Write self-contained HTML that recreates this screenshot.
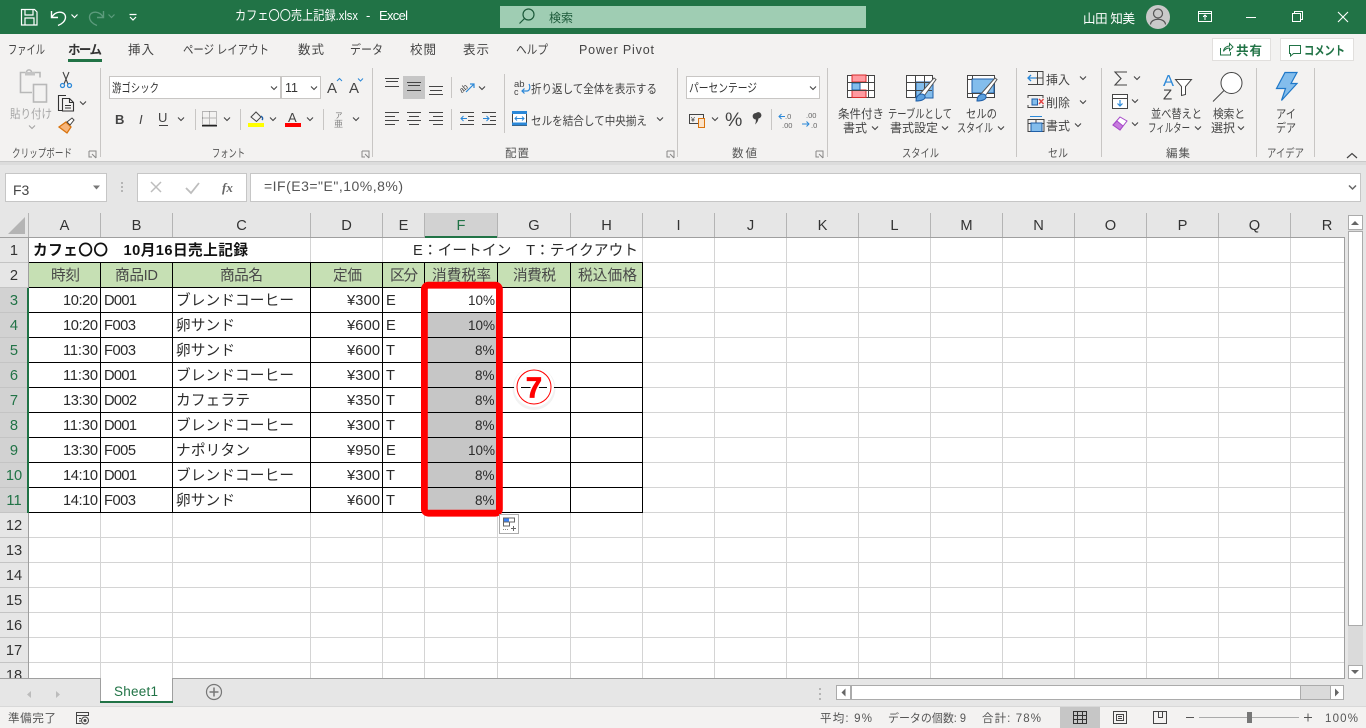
<!DOCTYPE html>
<html lang="ja"><head><meta charset="utf-8"><title>Excel</title>
<style>
html,body{margin:0;padding:0;width:1366px;height:728px;overflow:hidden;background:#e6e6e6}
svg{display:block;position:absolute;left:0;top:0}
text{font-family:"Liberation Sans","Noto Sans CJK JP",sans-serif;white-space:pre}
.r{font-size:12px;fill:#444}
.t{font-size:12.5px;fill:#444}
.g{font-size:11.5px;fill:#555}
.c{font-size:14.67px;fill:#2a2a2a}
.p{font-size:13.5px;fill:#2a2a2a}
.h{font-size:14.67px;fill:#484848}
.k{font-size:14.67px;fill:#333;text-anchor:middle}
.n{font-size:14.67px;fill:#333;text-anchor:middle}
.s{font-size:11.5px;fill:#555}
.i{fill:none;stroke:#444;stroke-width:1}
.q{shape-rendering:crispEdges}
</style></head><body>
<svg width="1366" height="728" viewBox="0 0 1366 728" xmlns="http://www.w3.org/2000/svg">
<defs>
<path id="v" d="M-3 -1.500L0 1.500L3 -1.500" fill="none" stroke="#444" stroke-width="1.100"/>
<path id="dl" d="M0 0h7v7M7 7L3 3M2 2v0M0 0v6h3" fill="none" stroke="#888" stroke-width="1"/>
</defs>
<!-- backgrounds -->
<rect width="1366" height="728" fill="#e6e6e6"/>
<rect width="1366" height="34" fill="#217346"/>
<rect y="34" width="1366" height="127" fill="#f3f2f1"/>
<rect y="161" width="1366" height="1" fill="#c9c9c9"/>
<rect y="162" width="1366" height="3" fill="#dcdcdc"/>
<!-- title bar -->
<g fill="none" stroke="#fff" stroke-width="1.200">
<path d="M21.500 9.500h13l2.500 2.500v13h-15.500z"/><path d="M25 9.500v5.500h8v-5.500M25 25v-7h9v7"/>
<path d="M51.500 11v6.500h6.500M52 17.500C54 11 65 10 65.500 17C65.500 21 62 24 58 25.500" stroke-width="1.400"/>
<path d="M71.500 14.500l3 3 3-3"/>
<g stroke="#5c9b7c"><path d="M103.500 11v6.500h-6.500M103 17.500C101 11 90 10 89.500 17C89.500 21 93 24 97 25.500" stroke-width="1.400"/><path d="M108.500 14.500l3 3 3-3"/></g>
<path d="M129.500 14.500h7M130 17l3 3 3-3"/>
</g>
<text x="235" y="20" fill="#fff" style="font-size:13px" textLength="123" lengthAdjust="spacingAndGlyphs">カフェ〇〇売上記録.xlsx</text>
<text x="366" y="20" fill="#fff" style="font-size:13px">-</text>
<text x="379" y="20" fill="#fff" style="font-size:13px" textLength="29">Excel</text>
<rect x="500" y="6" width="366" height="22" fill="#9fcdb3"/>
<g fill="none" stroke="#1c5a3a" stroke-width="1.200"><circle cx="528.500" cy="14.500" r="5.500"/><path d="M524.500 18.500l-5 5"/></g>
<text x="549" y="22" fill="#1c5a3a" style="font-size:12px" textLength="24">検索</text>
<text x="1083" y="23" fill="#fff" style="font-size:12.5px" textLength="52">山田 知美</text>
<circle cx="1158" cy="17" r="12" fill="#c9c9c9"/>
<g fill="none" stroke="#555" stroke-width="1.200"><circle cx="1158" cy="13.500" r="4.500"/><path d="M1150.500 24.500c.5-7 14.500-7 15 0"/></g>
<g fill="none" stroke="#fff" stroke-width="1.100" class="q">
<path d="M1198.500 11.500h13v10h-13zM1198.500 13.500h13M1205 20v-5M1203 17l2-2 2 2"/>
<path d="M1246 17.500h10"/>
<path d="M1292.500 13.500h8v8h-8zM1294.500 13.500v-2h8v8h-2"/>
</g>
<path d="M1338 12l10 10M1348 12l-10 10" stroke="#fff" stroke-width="1.100" fill="none"/>
<!-- ribbon tabs -->
<g class="t">
<text x="8" y="54" class="t" textLength="37" lengthAdjust="spacingAndGlyphs">ファイル</text>
<text x="68" y="54" style="font-size:12.5px;font-weight:700;fill:#333" textLength="34">ホーム</text>
<text x="128" y="54" class="t" textLength="26">挿入</text>
<text x="183" y="54" class="t" textLength="86" lengthAdjust="spacingAndGlyphs">ページ レイアウト</text>
<text x="298" y="54" class="t" textLength="26">数式</text>
<text x="350" y="54" class="t" textLength="33" lengthAdjust="spacingAndGlyphs">データ</text>
<text x="410" y="54" class="t" textLength="26">校閲</text>
<text x="463" y="54" class="t" textLength="26">表示</text>
<text x="516" y="54" class="t" textLength="32" lengthAdjust="spacingAndGlyphs">ヘルプ</text>
<text x="579" y="54" class="t" textLength="75">Power Pivot</text>
</g>
<rect x="68" y="59" width="34" height="3" fill="#217346"/>
<!-- share / comment -->
<rect x="1212.500" y="38.500" width="58" height="22" fill="#fff" stroke="#e1dfdd" class="q"/>
<path d="M1220.500 48v7h10v-3M1223.500 51c.5-3 3-5 6-5v-2.500l3.500 3.500-3.500 3.500v-2.500c-2.500 0-4.500 1-6 3.500" fill="none" stroke="#217346"/>
<text x="1236" y="55" style="font-size:12.5px;font-weight:700;fill:#217346" textLength="26">共有</text>
<rect x="1280.500" y="38.500" width="73" height="22" fill="#fff" stroke="#e1dfdd" class="q"/>
<path d="M1289.500 45.500h11v8h-7l-3 2.500v-2.500h-1z" fill="none" stroke="#217346"/>
<text x="1304" y="55" style="font-size:12.5px;font-weight:700;fill:#217346" textLength="41" lengthAdjust="spacingAndGlyphs">コメント</text>
<!-- ribbon separators -->
<g fill="#c8c6c4" class="q">
<rect x="100" y="68" width="1" height="89"/><rect x="372" y="68" width="1" height="89"/><rect x="677" y="68" width="1" height="89"/><rect x="827" y="68" width="1" height="89"/><rect x="1016" y="68" width="1" height="89"/><rect x="1101" y="68" width="1" height="89"/><rect x="1256" y="68" width="1" height="89"/><rect x="1314" y="68" width="1" height="89"/>
<rect x="195" y="109" width="1" height="21"/><rect x="240" y="109" width="1" height="21"/><rect x="323" y="109" width="1" height="21"/>
<rect x="451" y="77" width="1" height="21"/><rect x="451" y="109" width="1" height="21"/><rect x="504" y="74" width="1" height="59"/><rect x="771" y="109" width="1" height="21"/>
</g>
<!-- clipboard -->
<g fill="none" stroke="#b8b8b8" stroke-width="1.600"><path d="M32 92.500h-11.500v-20h6c0-3.500 5-3.500 5 0h8.500v5"/><rect x="33.500" y="84.500" fill="#f3f2f1" width="13" height="17.500"/></g>
<rect x="25" y="72" width="10" height="3.500" fill="#c4c4c4"/>
<text x="10" y="118" style="font-size:12px;fill:#a6a6a6" textLength="42" lengthAdjust="spacingAndGlyphs">貼り付け</text>
<use href="#v" x="32" y="127" opacity=".45"/>
<g fill="none" stroke="#444" stroke-width="1.100"><path d="M63 72l5 12M69 72l-5 12"/></g>
<circle cx="62.500" cy="85.500" r="2" fill="none" stroke="#2b88d8" stroke-width="1.300"/><circle cx="69.500" cy="85.500" r="2" fill="none" stroke="#2b88d8" stroke-width="1.300"/>
<g fill="none" stroke="#333" stroke-width="1.100"><path d="M62 110.500h-3.500v-15h7.500"/><path d="M62.500 98.500h7l4 4v8.500h-11zM69.500 98.500v4h4M65 105.500h6M65 108h6" fill="#f3f2f1"/></g>
<use href="#v" x="83" y="103"/>
<path d="M59 127l7-5 5 5-4 6z" fill="#f7b57a" stroke="#d9730d" stroke-width="1.300"/><path d="M67 122l5-4 2 2-4 5z" fill="#fff" stroke="#444"/>
<text x="12" y="157" class="g" textLength="60" lengthAdjust="spacingAndGlyphs">クリップボード</text>
<use href="#dl" x="89" y="151"/>
<!-- font group -->
<rect x="109.500" y="76.500" width="171" height="22" fill="#fff" stroke="#c8c6c4" class="q"/>
<rect x="281.500" y="76.500" width="39" height="22" fill="#fff" stroke="#c8c6c4" class="q"/>
<text x="112" y="92" style="font-size:12px;fill:#333" textLength="47" lengthAdjust="spacingAndGlyphs">游ゴシック</text>
<text x="285" y="92" style="font-size:12.5px;fill:#333">11</text>
<use href="#v" x="274" y="88"/><use href="#v" x="314" y="88"/>
<text x="327" y="93" style="font-size:15px;fill:#444">A</text><path d="M337 81l2.500-2.500 2.500 2.500" fill="none" stroke="#2b88d8"/>
<text x="349" y="93" style="font-size:15px;fill:#444">A</text><path d="M358 78.500l2.500 2.500 2.500-2.500" fill="none" stroke="#2b88d8"/>
<text x="115" y="124" style="font-size:13px;font-weight:700;fill:#444">B</text>
<text x="139" y="124" style="font-size:13px;font-style:italic;fill:#444">I</text>
<text x="158" y="122" style="font-size:13px;fill:#444">U</text><rect x="159" y="125" width="9" height="1" fill="#444"/>
<use href="#v" x="181" y="119"/>
<path d="M202.500 111.500h14v13h-14zM209.500 111.500v13M202.500 118h14" fill="none" stroke="#777" stroke-dasharray="1 1" stroke-width=".9"/><rect x="202" y="125" width="15" height="1.500" fill="#222"/>
<use href="#v" x="227" y="119"/>
<path d="M251 117l5-5 5 5-4.500 4.500z" fill="none" stroke="#444"/><path d="M261 116c2 1.500 2 3 1 4" stroke="#1f5fa8" stroke-width="1.400" fill="none"/>
<rect x="248" y="123" width="16" height="4" fill="#ff0"/>
<use href="#v" x="273" y="119"/>
<text x="288" y="122" style="font-size:13px;fill:#444">A</text>
<rect x="285" y="123" width="16" height="4" fill="#f00"/>
<use href="#v" x="310" y="119"/>
<text x="335" y="118" style="font-size:7.500px;fill:#777">ア</text><text x="334" y="127" style="font-size:9px;fill:#888">亜</text>
<use href="#v" x="356" y="119"/>
<text x="212" y="157" class="g" textLength="33" lengthAdjust="spacingAndGlyphs">フォント</text>
<use href="#dl" x="362" y="151"/>
<!-- alignment -->
<rect x="403" y="76" width="22" height="23" fill="#c6c6c6"/>
<g fill="none" stroke="#444" class="q">
<path d="M385 78.500h14M386 81.500h12M385 86.500h14"/>
<path d="M407 82.500h14M408 85.500h12M407 90.500h14"/>
<path d="M429 86.500h14M430 90.500h12M429 94.500h14"/>
<path d="M385 112.500h14M385 116.500h10M385 120.500h14M385 124.500h10"/>
<path d="M407 112.500h14M409 116.500h10M407 120.500h14M409 124.500h10"/>
<path d="M429 112.500h14M433 116.500h10M429 120.500h14M433 124.500h10"/>
<path d="M460 112.500h14M468 116.500h6M468 120.500h6M460 124.500h14"/>
<path d="M482 112.500h14M490 116.500h6M490 120.500h6M482 124.500h14"/>
</g>
<path d="M461 118.500h6M463.500 116l-2.500 2.500 2.500 2.500M483 118.500h6M486.500 116l2.500 2.500-2.500 2.500" fill="none" stroke="#2b88d8"/>
<text x="459" y="90" style="font-size:8px;fill:#444" transform="rotate(-40 465 88)">ab</text>
<path d="M466 92l8-8M470 84h4v4" fill="none" stroke="#2b88d8" stroke-width="1.200"/>
<use href="#v" x="482" y="88"/>
<text x="514" y="87" style="font-size:9.500px;fill:#444">ab</text><text x="514" y="95" style="font-size:9px;fill:#444">c</text>
<path d="M529 84c2 4 0 7-2 7h-5M524.500 88.500l-2.500 2.500 2.500 2.500" fill="none" stroke="#2b88d8" stroke-width="1.200"/>
<text x="531" y="93" class="r" textLength="126" lengthAdjust="spacingAndGlyphs">折り返して全体を表示する</text>
<rect x="512.500" y="111.500" width="14" height="14" fill="#fff" stroke="#444" class="q"/><rect x="512" y="111" width="15" height="3" fill="#2b88d8"/><rect x="512" y="122.500" width="15" height="3" fill="#2b88d8"/>
<path d="M515 118.500h9M517 116.500l-2 2 2 2M522 116.500l2 2-2 2" fill="none" stroke="#2b88d8"/>
<text x="531" y="125" class="r" textLength="116" lengthAdjust="spacingAndGlyphs">セルを結合して中央揃え</text>
<use href="#v" x="660" y="119"/>
<text x="505" y="157" class="g" textLength="24">配置</text>
<use href="#dl" x="667" y="151"/>
<!-- number -->
<rect x="686.500" y="76.500" width="133" height="22" fill="#fff" stroke="#c8c6c4" class="q"/>
<text x="689" y="92" style="font-size:12px;fill:#333" textLength="68" lengthAdjust="spacingAndGlyphs">パーセンテージ</text>
<use href="#v" x="813" y="88"/>
<rect x="689.500" y="114.500" width="14" height="9" fill="none" stroke="#444"/><text x="691" y="122" style="font-size:7px;fill:#444">¥</text>
<rect x="698.500" y="118.500" width="6" height="9" fill="#fbe3c9" stroke="#d9730d"/>
<use href="#v" x="715" y="119"/>
<text x="725" y="126" style="font-size:19.500px;fill:#444">%</text>
<path d="M756 113a3.200 3.200 0 1 1 2.500 5.500c-.3 2.500-1.500 4.500-3.500 6c.8-2 1-3.500.8-5a3.200 3.200 0 0 1 .2-6.500z" fill="#444"/>
<text x="785" y="119" style="font-size:7.500px;fill:#666">.0</text><text x="782" y="128" style="font-size:7.500px;fill:#666">.00</text><path d="M779 116.500h6M781.500 114l-2.500 2.500 2.500 2.500" fill="none" stroke="#2b88d8"/>
<text x="806" y="118" style="font-size:7.500px;fill:#666">.00</text><text x="811" y="128" style="font-size:7.500px;fill:#666">.0</text><path d="M802 124h7M806.500 121.500l2.500 2.500-2.500 2.500" fill="none" stroke="#2b88d8"/>
<text x="732" y="157" class="g" textLength="25">数値</text>
<use href="#dl" x="816" y="151"/>
<!-- styles -->
<g class="q">
<rect x="847.500" y="75.500" width="27" height="22" fill="#fff" stroke="#444"/>
<rect x="852" y="75" width="14" height="7" fill="#ff9aa0" stroke="#d92b2b"/><rect x="852" y="90" width="14" height="7.500" fill="#ff9aa0" stroke="#d92b2b"/>
<rect x="852" y="83" width="8" height="7" fill="#83bdec" stroke="#1f5fa8"/>
<path d="M868.500 75v22M847 82.500h27M847 90.500h27" stroke="#444" fill="none"/>
<rect x="906.500" y="75.500" width="26" height="22" fill="#fff" stroke="#444"/>
<rect x="916" y="82" width="17" height="16" fill="#83bdec" stroke="#1f5fa8"/>
<path d="M915.500 75v22M924.500 75v22M906 82.500h26M906 90.500h26" stroke="#444" fill="none"/>
<rect x="967.500" y="75.500" width="27" height="22" fill="#fff" stroke="#444"/>
<rect x="972" y="79" width="22" height="14" fill="#83bdec" stroke="#1f5fa8"/>
<path d="M972.500 75v4M967 79.500h5M967 93.500h27M972.500 93v5" stroke="#444" fill="none"/>
</g>
<g fill="#fff" stroke="#555"><path d="M919 95l15-17 2 1.500-13 18z"/><path d="M980 95l15-17 2 1.500-13 18z"/></g>
<path d="M916 101c0-7 7-9 9-5 1 4-5 5-9 5z" fill="#5ca0de" stroke="#1f5fa8"/>
<path d="M977 101c0-7 7-9 9-5 1 4-5 5-9 5z" fill="#5ca0de" stroke="#1f5fa8"/>
<text x="838" y="118" class="r" textLength="46" lengthAdjust="spacingAndGlyphs">条件付き</text><text x="843" y="132" class="r" textLength="24">書式</text><use href="#v" x="875" y="128"/>
<text x="888" y="118" class="r" textLength="64" lengthAdjust="spacingAndGlyphs">テーブルとして</text><text x="890" y="132" class="r" textLength="48">書式設定</text><use href="#v" x="945" y="128"/>
<text x="966" y="118" class="r" textLength="31" lengthAdjust="spacingAndGlyphs">セルの</text><text x="957" y="132" class="r" textLength="36" lengthAdjust="spacingAndGlyphs">スタイル</text><use href="#v" x="1001" y="128"/>
<text x="902" y="157" class="g" textLength="37" lengthAdjust="spacingAndGlyphs">スタイル</text>
<!-- cells -->
<g class="q" fill="none" stroke="#444">
<path d="M1033 71.500h10v13h-10M1028 71.500h5M1028 84.500h5M1037.500 71v13M1033 78h10"/>
<path d="M1028 95.500h15M1028 107.500h15M1028 95v3M1028 105v3M1043 95v3M1043 105v3"/>
<path d="M1028 119.500h16v12h-16zM1028 123.500h16M1036 119v13"/>
</g>
<path d="M1028 78h8M1031 75l-3 3 3 3" stroke="#2b88d8" fill="none" stroke-width="1.300"/>
<rect x="1032" y="99" width="5.500" height="6" fill="#83bdec" stroke="#1f5fa8"/><path d="M1039 99l4.500 5M1043.500 99l-4.500 5" stroke="#e04343" stroke-width="1.400"/>
<rect x="1031" y="123" width="11" height="8.500" fill="#83bdec" stroke="#1f5fa8"/><path d="M1030 116.500h12" stroke="#2b88d8"/>
<text x="1046" y="84" class="r" textLength="24">挿入</text><use href="#v" x="1083" y="78"/>
<text x="1046" y="107" class="r" textLength="24">削除</text><use href="#v" x="1083" y="102"/>
<text x="1046" y="130" class="r" textLength="24">書式</text><use href="#v" x="1078" y="125"/>
<text x="1048" y="157" class="g" textLength="20" lengthAdjust="spacingAndGlyphs">セル</text>
<!-- editing -->
<path d="M1127 72h-12l6 6.500-6 6.500h12" fill="none" stroke="#444" stroke-width="1.100"/><use href="#v" x="1137" y="78"/>
<rect x="1112.500" y="94.500" width="15" height="14" fill="#fff" stroke="#444"/><path d="M1112 98.500h16" stroke="#444"/><path d="M1120 100v6M1117.500 103.500l2.500 2.500 2.500-2.500" stroke="#2b88d8" fill="none" stroke-width="1.200"/><use href="#v" x="1135" y="101"/>
<path d="M1113 125l7-8 7 4-7 9z" fill="#fff" stroke="#a64ac9"/><path d="M1113 125l4-4 6 5-3 4z" fill="#c77bde" stroke="#a64ac9"/><use href="#v" x="1135" y="124"/>
<text x="1163" y="86" style="font-size:16px;fill:#2b88d8" textLength="11" lengthAdjust="spacingAndGlyphs">A</text><text x="1163" y="99.500" style="font-size:15px;fill:#444">Z</text>
<path d="M1175.500 79.500h16l-6 7v8l-4 1v-9z" fill="#fff" stroke="#444"/>
<text x="1151" y="118" class="r" textLength="51" lengthAdjust="spacingAndGlyphs">並べ替えと</text><text x="1148" y="132" class="r" textLength="42" lengthAdjust="spacingAndGlyphs">フィルター</text><use href="#v" x="1198" y="128"/>
<circle cx="1231.500" cy="83" r="10.500" fill="#fff" stroke="#444"/><path d="M1224 90.500l-11 11" stroke="#444" fill="none"/>
<text x="1213" y="118" class="r" textLength="32" lengthAdjust="spacingAndGlyphs">検索と</text><text x="1211" y="132" class="r" textLength="24">選択</text><use href="#v" x="1241" y="128"/>
<text x="1166" y="157" class="g" textLength="24">編集</text>
<!-- ideas -->
<path d="M1285 72.500h12l-6 11h6l-15.500 17 4-12h-9z" fill="#83bdec" stroke="#1f78c8" stroke-width="1.200"/>
<text x="1276" y="118" class="r" textLength="20" lengthAdjust="spacingAndGlyphs">アイ</text><text x="1276" y="132" class="r" textLength="20" lengthAdjust="spacingAndGlyphs">デア</text>
<text x="1267" y="157" class="g" textLength="37" lengthAdjust="spacingAndGlyphs">アイデア</text>
<path d="M1347 158l5-4.500 5 4.500" fill="none" stroke="#444" stroke-width="1.200"/>
<!-- formula bar -->
<rect x="5.500" y="173.500" width="101" height="28" fill="#fff" stroke="#c6c6c6" class="q"/>
<text x="13" y="195" style="font-size:14px;fill:#444">F3</text>
<path d="M93 185.500h7l-3.500 4z" fill="#777"/>
<g fill="#b5b5b5"><rect x="121" y="182" width="2" height="2"/><rect x="121" y="186" width="2" height="2"/><rect x="121" y="190" width="2" height="2"/></g>
<rect x="137.500" y="173.500" width="109" height="28" fill="#fff" stroke="#c6c6c6" class="q"/>
<path d="M151 182l10 10M161 182l-10 10" stroke="#bdbdbd" stroke-width="1.500" fill="none"/>
<path d="M186 188l5 5 8-10" stroke="#bdbdbd" stroke-width="1.800" fill="none"/>
<text x="222" y="192" style="font-family:'Liberation Serif',serif;font-size:13px;font-style:italic;font-weight:700;fill:#666">fx</text>
<rect x="250.500" y="173.500" width="1110" height="28" fill="#fff" stroke="#c6c6c6" class="q"/>
<text x="264" y="191" style="font-size:14px;fill:#555" textLength="139">=IF(E3="E",10%,8%)</text>
<path d="M1349 185.500l3.500 3.500 3.500-3.500" fill="none" stroke="#666" stroke-width="1.500"/>
<!-- sheet area -->
<rect x="29" y="238" width="1316" height="440" fill="#fff"/>
<!-- header highlights -->
<rect x="425" y="213" width="72" height="24" fill="#d2d2d2"/>
<rect x="0" y="288" width="28" height="225" fill="#d2d2d2"/>
<path d="M8 234h17v-17z" fill="#b4b4b4"/>
<!-- light gridlines -->
<g stroke="#d4d4d4" fill="none" class="q">
<path d="M100.500 262V678M172.500 262V678M310.500 238V678M382.500 238V678M424.500 262V678M497.500 262V678M570.500 262V678M642.500 238V678M714.500 238V678M786.500 238V678M858.500 238V678M930.500 238V678M1002.500 238V678M1074.500 238V678M1146.500 238V678M1218.500 238V678M1290.500 238V678"/>
<path d="M29 262.500H1345M29 287.500H1345M29 312.500H1345M29 337.500H1345M29 362.500H1345M29 387.500H1345M29 412.500H1345M29 437.500H1345M29 462.500H1345M29 487.500H1345M29 512.500H1345M29 537.500H1345M29 562.500H1345M29 587.500H1345M29 612.500H1345M29 637.500H1345M29 662.500H1345"/>
</g>
<!-- header lines -->
<g stroke="#c4c4c4" fill="none" class="q">
<path d="M0 262.500H28M0 287.500H28M0 312.500H28M0 337.500H28M0 362.500H28M0 387.500H28M0 412.500H28M0 437.500H28M0 462.500H28M0 487.500H28M0 512.500H28M0 537.500H28M0 562.500H28M0 587.500H28M0 612.500H28M0 637.500H28M0 662.500H28"/>
</g>
<g stroke="#b4b4b4" fill="none" class="q">
<path d="M28.500 213V237M100.500 213V237M172.500 213V237M310.500 213V237M382.500 213V237M424.500 213V237M497.500 213V237M570.500 213V237M642.500 213V237M714.500 213V237M786.500 213V237M858.500 213V237M930.500 213V237M1002.500 213V237M1074.500 213V237M1146.500 213V237M1218.500 213V237M1290.500 213V237"/>
</g>
<g stroke="#9f9f9f" fill="none" class="q">
<path d="M0 237.500H1345M28.500 238V678M1344.500 237V678"/>
</g>
<rect x="425" y="236" width="72" height="2" fill="#217346"/>
<rect x="27" y="288" width="2" height="225" fill="#217346"/>
<!-- table fills -->
<rect x="29" y="263" width="613" height="24" fill="#c6e0b4"/>
<rect x="425" y="313" width="72" height="199" fill="#c6c6c6"/>
<g stroke="#000" fill="none" class="q">
<path d="M29 262.500H643M29 287.500H643M29 312.500H643M29 337.500H643M29 362.500H643M29 387.500H643M29 412.500H643M29 437.500H643M29 462.500H643M29 487.500H643M29 512.500H643"/>
<path d="M100.500 262V513M172.500 262V513M310.500 262V513M382.500 262V513M424.500 262V513M497.500 262V513M570.500 262V513M642.500 262V513"/>
</g>
<!-- column letters -->
<g>
<text class="k" x="64.500" y="230">A</text><text class="k" x="136.500" y="230">B</text><text class="k" x="241.500" y="230">C</text><text class="k" x="346.500" y="230">D</text><text class="k" x="403.500" y="230">E</text><text class="k" x="461" y="230" style="fill:#217346">F</text><text class="k" x="534" y="230">G</text><text class="k" x="606.500" y="230">H</text><text class="k" x="678.500" y="230">I</text><text class="k" x="750.500" y="230">J</text><text class="k" x="822.500" y="230">K</text><text class="k" x="894.500" y="230">L</text><text class="k" x="966.500" y="230">M</text><text class="k" x="1038.500" y="230">N</text><text class="k" x="1110.500" y="230">O</text><text class="k" x="1182.500" y="230">P</text><text class="k" x="1254.500" y="230">Q</text><text class="k" x="1327" y="230">R</text>
</g>
<!-- row numbers -->
<g>
<text class="n" x="14" y="255">1</text><text class="n" x="14" y="280">2</text>
<g style="fill:#217346"><text class="n" x="14" y="305" style="fill:#217346">3</text><text class="n" x="14" y="330" style="fill:#217346">4</text><text class="n" x="14" y="355" style="fill:#217346">5</text><text class="n" x="14" y="380" style="fill:#217346">6</text><text class="n" x="14" y="405" style="fill:#217346">7</text><text class="n" x="14" y="430" style="fill:#217346">8</text><text class="n" x="14" y="455" style="fill:#217346">9</text><text class="n" x="14" y="480" style="fill:#217346">10</text><text class="n" x="14" y="505" style="fill:#217346">11</text></g>
<text class="n" x="14" y="530">12</text><text class="n" x="14" y="555">13</text><text class="n" x="14" y="580">14</text><text class="n" x="14" y="605">15</text><text class="n" x="14" y="630">16</text><text class="n" x="14" y="655">17</text><text class="n" x="14" y="680">18</text>
</g>
<!-- row 1 -->
<text x="33" y="255" style="font-size:14.670px;font-weight:700;fill:#111" textLength="215">カフェ〇〇　10月16日売上記録</text>
<text x="413" y="255" class="c" textLength="225">E：イートイン　T：テイクアウト</text>
<!-- row 2 -->
<text class="h" x="51" y="280" textLength="29">時刻</text>
<text class="h" x="115" y="280" textLength="43">商品ID</text>
<text class="h" x="220" y="280" textLength="43">商品名</text>
<text class="h" x="333" y="280" textLength="29">定価</text>
<text class="h" x="390" y="280" textLength="28">区分</text>
<text class="h" x="432" y="280" textLength="59">消費税率</text>
<text class="h" x="513" y="280" textLength="43">消費税</text>
<text class="h" x="578" y="280" textLength="59">税込価格</text>
<!-- data -->
<g>
<text class="c" x="63" y="305" textLength="35">10:20</text><text class="c" x="104" y="305" textLength="33">D001</text><text class="c" x="176" y="305" textLength="118">ブレンドコーヒー</text><text class="c" x="347" y="305" textLength="33">¥300</text><text class="c" x="386" y="305">E</text><text class="p" x="468" y="305">10%</text>
<text class="c" x="63" y="330" textLength="35">10:20</text><text class="c" x="104" y="330" textLength="32">F003</text><text class="c" x="176" y="330" textLength="59">卵サンド</text><text class="c" x="347" y="330" textLength="33">¥600</text><text class="c" x="386" y="330">E</text><text class="p" x="468" y="330">10%</text>
<text class="c" x="63" y="355" textLength="35">11:30</text><text class="c" x="104" y="355" textLength="32">F003</text><text class="c" x="176" y="355" textLength="59">卵サンド</text><text class="c" x="347" y="355" textLength="33">¥600</text><text class="c" x="386" y="355">T</text><text class="p" x="475" y="355">8%</text>
<text class="c" x="63" y="380" textLength="35">11:30</text><text class="c" x="104" y="380" textLength="33">D001</text><text class="c" x="176" y="380" textLength="118">ブレンドコーヒー</text><text class="c" x="347" y="380" textLength="33">¥300</text><text class="c" x="386" y="380">T</text><text class="p" x="475" y="380">8%</text>
<text class="c" x="63" y="405" textLength="35">13:30</text><text class="c" x="104" y="405" textLength="33">D002</text><text class="c" x="176" y="405" textLength="74">カフェラテ</text><text class="c" x="347" y="405" textLength="33">¥350</text><text class="c" x="386" y="405">T</text><text class="p" x="475" y="405">8%</text>
<text class="c" x="63" y="430" textLength="35">11:30</text><text class="c" x="104" y="430" textLength="33">D001</text><text class="c" x="176" y="430" textLength="118">ブレンドコーヒー</text><text class="c" x="347" y="430" textLength="33">¥300</text><text class="c" x="386" y="430">T</text><text class="p" x="475" y="430">8%</text>
<text class="c" x="63" y="455" textLength="35">13:30</text><text class="c" x="104" y="455" textLength="32">F005</text><text class="c" x="176" y="455" textLength="74">ナポリタン</text><text class="c" x="347" y="455" textLength="33">¥950</text><text class="c" x="386" y="455">E</text><text class="p" x="468" y="455">10%</text>
<text class="c" x="63" y="480" textLength="35">14:10</text><text class="c" x="104" y="480" textLength="33">D001</text><text class="c" x="176" y="480" textLength="118">ブレンドコーヒー</text><text class="c" x="347" y="480" textLength="33">¥300</text><text class="c" x="386" y="480">T</text><text class="p" x="475" y="480">8%</text>
<text class="c" x="63" y="505" textLength="35">14:10</text><text class="c" x="104" y="505" textLength="32">F003</text><text class="c" x="176" y="505" textLength="59">卵サンド</text><text class="c" x="347" y="505" textLength="33">¥600</text><text class="c" x="386" y="505">T</text><text class="p" x="475" y="505">8%</text>
</g>
<!-- red highlight -->
<rect x="424.400" y="285.200" width="75" height="228" rx="4" fill="none" stroke="#f00" stroke-width="6.800"/>
<!-- circled 7 -->
<circle cx="534" cy="388.500" r="21.500" fill="#000" opacity=".05"/>
<circle cx="534" cy="387" r="20" fill="#fff"/>
<path d="M521 387.500h26" stroke="#000" class="q"/>
<circle cx="534" cy="387" r="17" fill="none" stroke="#f00" stroke-width="1"/>
<text x="534" y="397.500" text-anchor="middle" style="font-size:29px;font-weight:700;fill:#fff;stroke:#fff;stroke-width:4">7</text>
<text x="534" y="397.500" text-anchor="middle" style="font-size:29px;font-weight:700;fill:#f00;stroke:#f00;stroke-width:.8">7</text>
<!-- paste options -->
<rect x="499.500" y="514.500" width="19" height="19" fill="#fff" stroke="#ababab" class="q"/>
<rect x="503" y="518" width="6" height="4" fill="#3b82f6"/>
<path d="M503.500 518h11v4h-11zM503.500 522v4h6v-4" fill="none" stroke="#666"/>
<path d="M503 529.500h6" stroke="#888" stroke-dasharray="1 1"/><path d="M511 528.500h5M513.500 526v5" stroke="#666" fill="none"/>
<!-- vertical scrollbar -->
<rect x="1345" y="213" width="21" height="466" fill="#e6e6e6"/>
<rect x="1348" y="215" width="15" height="463" fill="#dadada"/>
<rect x="1348.500" y="215.500" width="14" height="14" fill="#fff" stroke="#ababab" class="q"/>
<path d="M1351 225h8l-4-4z" fill="#666"/>
<rect x="1348.500" y="231.500" width="14" height="394" fill="#fff" stroke="#ababab" class="q"/>
<rect x="1348.500" y="665.500" width="14" height="13" fill="#fff" stroke="#ababab" class="q"/>
<path d="M1351 670h8l-4 4z" fill="#666"/>
<!-- tab bar -->
<rect x="0" y="679" width="1366" height="27" fill="#e6e6e6"/>
<rect x="0" y="678" width="1345" height="1" fill="#9f9f9f"/>
<path d="M31 691l-4 3.500 4 3.500zM56 691l4 3.500-4 3.500z" fill="#bcbcbc"/>
<rect x="100" y="678" width="73" height="25" fill="#fff"/>
<path d="M100.500 678v25M172.500 678v25" stroke="#9f9f9f" class="q"/>
<rect x="100" y="701" width="73" height="2" fill="#217346"/>
<text x="114" y="696" style="font-size:13.500px;fill:#217346" textLength="44">Sheet1</text>
<circle cx="214" cy="692" r="7.500" fill="none" stroke="#777" stroke-width="1.200"/><path d="M209.500 692h9M214 687.500v9" stroke="#777" stroke-width="1.500"/>
<g fill="#b5b5b5"><rect x="819" y="688" width="2" height="2"/><rect x="819" y="693" width="2" height="2"/><rect x="819" y="698" width="2" height="2"/></g>
<rect x="836.500" y="685.500" width="507" height="14" fill="#dadada" stroke="#ababab" class="q"/>
<rect x="836.500" y="685.500" width="14" height="14" fill="#fff" stroke="#ababab" class="q"/>
<path d="M845.500 688.500l-4 4 4 4z" fill="#666"/>
<rect x="851.500" y="685.500" width="449" height="14" fill="#fff" stroke="#ababab" class="q"/>
<rect x="1330.500" y="685.500" width="13" height="14" fill="#fff" stroke="#ababab" class="q"/>
<path d="M1335 688.500l4 4-4 4z" fill="#666"/>
<!-- status bar -->
<rect x="0" y="706" width="1366" height="22" fill="#f3f2f1"/>
<rect x="0" y="706" width="1366" height="1" fill="#d8d8d8"/>
<text x="8" y="722" class="s" textLength="48">準備完了</text>
<path d="M76.500 712.500h12v3h-12zM76.500 712.500v11h5M79 718.500h2M79 721h2" fill="none" stroke="#444"/><circle cx="85" cy="720.500" r="3.500" fill="none" stroke="#444"/><circle cx="85" cy="720.500" r="1.500" fill="#444"/>
<text x="820" y="722" class="s" textLength="52">平均: 9%</text>
<text x="888" y="722" class="s" textLength="78" lengthAdjust="spacingAndGlyphs">データの個数: 9</text>
<text x="982" y="722" class="s" textLength="59">合計: 78%</text>
<rect x="1060" y="707" width="40" height="21" fill="#c6c6c6"/>
<path d="M1073.500 711.500h13v12h-13zM1077.500 711.500v12M1082.500 711.500v12M1073.500 715.500h13M1073.500 719.500h13" fill="none" stroke="#333" class="q"/>
<path d="M1113.500 711.500h13v12h-13zM1116.500 714.500h7v6h-7zM1118 716.500h4M1118 718.500h4" fill="none" stroke="#444" class="q"/>
<path d="M1153.500 711.500h13v12h-13zM1158.500 711.500v6h4v-6" fill="none" stroke="#444" class="q"/>
<rect x="1186" y="717" width="8" height="1" fill="#555"/>
<rect x="1199" y="717" width="100" height="1" fill="#aaa"/>
<rect x="1247" y="712" width="5" height="11" fill="#777"/>
<path d="M1304 717.500h8M1308 713.500v8" stroke="#555" fill="none" class="q"/>
<text x="1325" y="722" class="s" textLength="33">100%</text>
</svg>
</body></html>
